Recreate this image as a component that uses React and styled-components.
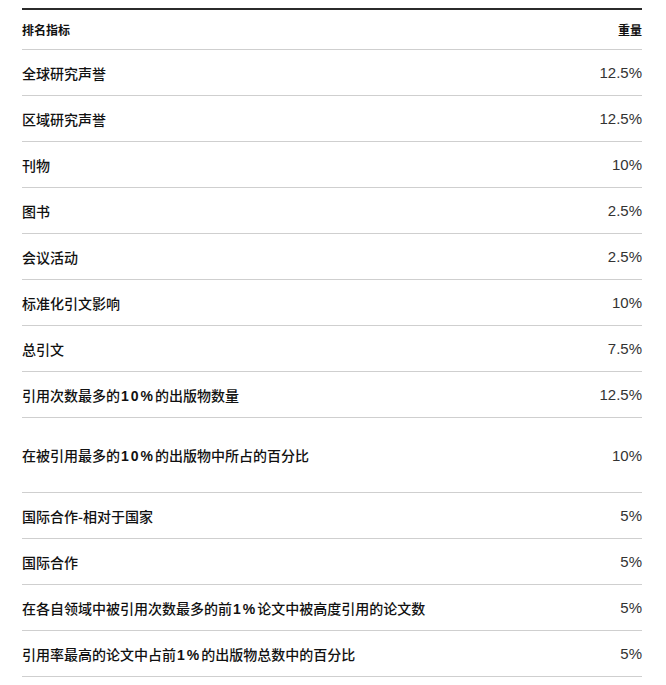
import React from "react";
import styled, { createGlobalStyle } from "styled-components";

const Global = createGlobalStyle`
  body { margin: 0; background: #fff; }
`;

const Wrap = styled.div`
  padding: 8px 24px 0 22px;
`;

const Table = styled.table`
  width: 100%;
  border-collapse: collapse;
  border-top: 2px solid #2b2b2b;
  font-family: "Noto Sans CJK SC", Roboto, sans-serif;
  color: #111;
`;

const HeadCell = styled.th`
  height: 39px;
  padding: 0;
  font-size: 12px;
  font-weight: 700;
  text-align: ${(p) => (p.$right ? "right" : "left")};
  border-bottom: 1px solid #cfcfcf;
  vertical-align: middle;
  color: #111;
`;

const Row = styled.tr`
  height: ${(p) => (p.$tall ? 75 : 46)}px;
  border-bottom: 1px solid #cfcfcf;
`;

const Label = styled.td`
  padding: 0;
  font-size: 14px;
  font-weight: 500;
  color: #111;
  vertical-align: middle;
`;

const Latin = styled.span`
  font-family: "Liberation Sans", Arial, sans-serif;
  font-weight: 700;
  font-size: 14px;
  letter-spacing: 2px;
  margin-left: 1px;
`;

const Value = styled.td`
  padding: 0;
  font-size: 15px;
  font-weight: 400;
  text-align: right;
  color: #333;
  vertical-align: middle;
  font-family: "Liberation Sans", Arial, sans-serif;
`;

const rows = [
  ["全球研究声誉", "12.5%"],
  ["区域研究声誉", "12.5%"],
  ["刊物", "10%"],
  ["图书", "2.5%"],
  ["会议活动", "2.5%"],
  ["标准化引文影响", "10%"],
  ["总引文", "7.5%"],
  ["引用次数最多的10%的出版物数量", "12.5%"],
  ["在被引用最多的10%的出版物中所占的百分比", "10%", true],
  ["国际合作-相对于国家", "5%"],
  ["国际合作", "5%"],
  ["在各自领域中被引用次数最多的前1%论文中被高度引用的论文数", "5%"],
  ["引用率最高的论文中占前1%的出版物总数中的百分比", "5%"],
];

function renderLabel(text) {
  return text.split(/([0-9]+%)/).map((part, i) =>
    /^[0-9]+%$/.test(part) ? <Latin key={i}>{part}</Latin> : part
  );
}

export default function App() {
  return (
    <Wrap>
      <Global />
      <Table>
        <thead>
          <tr>
            <HeadCell>排名指标</HeadCell>
            <HeadCell $right>重量</HeadCell>
          </tr>
        </thead>
        <tbody>
          {rows.map(([l, v, tall]) => (
            <Row key={l} $tall={tall}>
              <Label>{renderLabel(l)}</Label>
              <Value>{v}</Value>
            </Row>
          ))}
        </tbody>
      </Table>
    </Wrap>
  );
}
